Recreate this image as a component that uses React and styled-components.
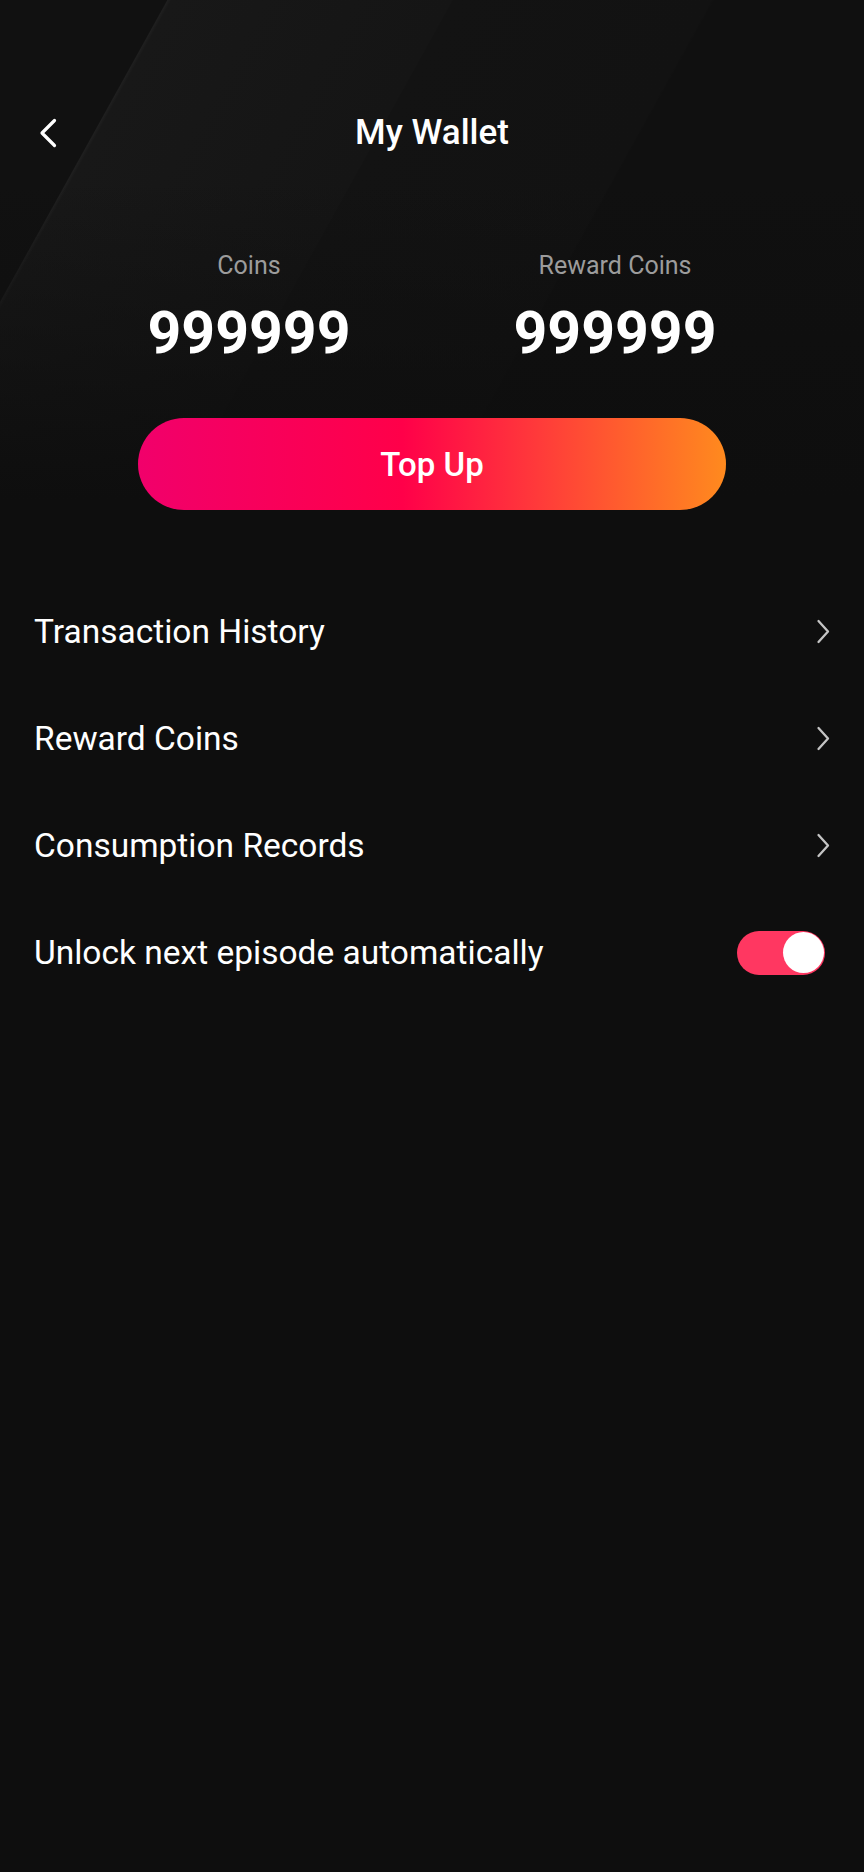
import React, { useState } from 'react'
import styled, { createGlobalStyle } from 'styled-components'

const GlobalStyle = createGlobalStyle`
  html, body {
    margin: 0;
    padding: 0;
    background: #0e0e0e;
  }
  body {
    font-family: Roboto, 'Noto Sans', 'Liberation Sans', sans-serif;
    color: #ffffff;
  }
  * {
    box-sizing: border-box;
  }
`

const menu = [
  { label: 'Transaction History' },
  { label: 'Reward Coins' },
  { label: 'Consumption Records' }
]

const BackIcon = () => (
  <svg width="18" height="30" viewBox="0 0 18 30" fill="none">
    <path d="M15.5 2.5 L3 15 L15.5 27.5" stroke="#ffffff" strokeWidth="3.2" strokeLinecap="round" strokeLinejoin="round" />
  </svg>
)

const ChevronIcon = () => (
  <svg width="15" height="25" viewBox="0 0 15 25" fill="none">
    <path d="M2.5 2 L12 12.5 L2.5 23" stroke="#c4c4c4" strokeWidth="2.3" strokeLinecap="round" strokeLinejoin="round" />
  </svg>
)

const App = () => {
  const [autoUnlock, setAutoUnlock] = useState(true)

  return (
    <>
      <GlobalStyle />
      <Page>
        <Hero>
          <Header>
            <BackButton aria-label="Back"><BackIcon /></BackButton>
            <Title>My Wallet</Title>
            <span />
          </Header>
          <Balances>
            <Balance>
              <BalanceLabel>Coins</BalanceLabel>
              <BalanceValue>999999</BalanceValue>
            </Balance>
            <Balance>
              <BalanceLabel>Reward Coins</BalanceLabel>
              <BalanceValue>999999</BalanceValue>
            </Balance>
          </Balances>
          <TopUpButton>Top Up</TopUpButton>
        </Hero>
        <MenuList>
          {menu.map(item => (
            <MenuRow key={item.label}>
              <RowLabel>{item.label}</RowLabel>
              <ChevronIcon />
            </MenuRow>
          ))}
          <MenuRow>
            <RowLabel>Unlock next episode automatically</RowLabel>
            <Toggle $on={autoUnlock} onClick={() => setAutoUnlock(!autoUnlock)} aria-label="Unlock next episode automatically">
              <Knob />
            </Toggle>
          </MenuRow>
        </MenuList>
      </Page>
    </>
  )
}

export default App

const Page = styled.div`
  width: 864px;
  min-height: 1872px;
  background-color: #0e0e0e;
`
// diagonal panels behind the header, fading into the page colour
const Hero = styled.section`
  padding-top: 89px;
  background-image:
    linear-gradient(to bottom, rgba(14, 14, 14, 0) 0, rgba(14, 14, 14, 0) 180px, #0e0e0e 500px),
    linear-gradient(119deg,
      #111111 0, #111111 14.2%, #1f1f1f 14.3%, #181818 14.6%, #161616 30%, #151515 38.5%,
      #131313 38.6%, #121212 60.6%, #101010 60.8%, #101010 100%);
  background-repeat: no-repeat;
  background-size: 864px 560px;
`
const Header = styled.header`
  display: grid;
  grid-template-columns: 1fr auto 1fr;
  align-items: center;
  height: 88px;
`
const BackButton = styled.button`
  justify-self: start;
  display: flex;
  align-items: center;
  margin-left: 39px;
  padding: 0;
  border: none;
  background: none;
  cursor: pointer;
`
const Title = styled.h1`
  margin: 0;
  font-size: 35px;
  line-height: 40px;
  font-weight: 500;
  color: #ffffff;
`
const Balances = styled.div`
  display: grid;
  grid-template-columns: 1fr 1fr;
  padding: 0 66px;
  margin-top: 74px;
`
const Balance = styled.div`
  display: flex;
  flex-direction: column;
  align-items: center;
  gap: 22px;
`
const BalanceLabel = styled.span`
  font-size: 25px;
  line-height: 30px;
  color: #9c9c9c;
`
const BalanceValue = styled.span`
  font-size: 59px;
  line-height: 60px;
  font-weight: 700;
  color: #ffffff;
`
const TopUpButton = styled.button`
  display: block;
  width: 588px;
  height: 92px;
  margin: 55px auto 0;
  border: none;
  border-radius: 46px;
  background: linear-gradient(90deg, #f1006b 0%, #ff0049 45%, #ff3a3a 68%, #ff8a1e 100%);
  font-family: Roboto, 'Liberation Sans', sans-serif;
  font-size: 33px;
  font-weight: 500;
  color: #ffffff;
  cursor: pointer;
`
const MenuList = styled.ul`
  list-style: none;
  margin: 68px 0 0;
  padding: 0;
`
const MenuRow = styled.li`
  display: flex;
  align-items: center;
  justify-content: space-between;
  height: 107px;
  padding: 0 33px 0 34px;
`
const RowLabel = styled.span`
  font-size: 33.5px;
  line-height: 40px;
  color: #ffffff;
`
const Toggle = styled.button`
  display: flex;
  align-items: center;
  justify-content: ${p => (p.$on ? 'flex-end' : 'flex-start')};
  width: 88px;
  height: 44px;
  margin-right: 6px;
  padding: 0 1.5px;
  border: none;
  border-radius: 22px;
  background: ${p => (p.$on ? '#ff3761' : '#3a3a3a')};
  cursor: pointer;
`
const Knob = styled.span`
  width: 41px;
  height: 41px;
  border-radius: 50%;
  background: #ffffff;
`
